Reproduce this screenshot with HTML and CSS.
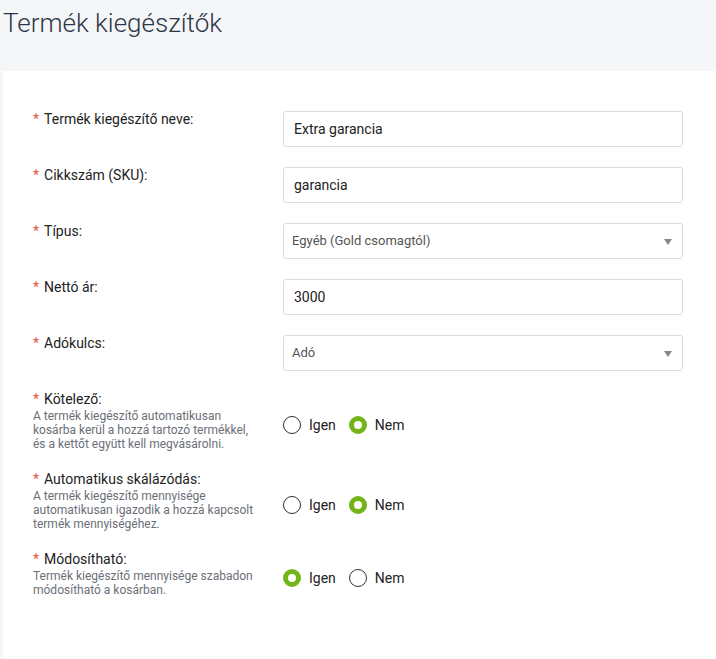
FILE: index.html
```html
<!DOCTYPE html>
<html lang="hu">
<head>
<meta charset="utf-8">
<title>Termék kiegészítők</title>
<link rel="stylesheet" href="styles.css">
</head>
<body>
<h1 class="page-title">Termék kiegészítők</h1>
<div class="card">
  <div class="row">
    <label class="label"><span class="req">*</span>Termék kiegészítő neve:</label>
    <div class="control"><div class="input">Extra garancia</div></div>
  </div>
  <div class="row">
    <label class="label"><span class="req">*</span>Cikkszám (SKU):</label>
    <div class="control"><div class="input">garancia</div></div>
  </div>
  <div class="row">
    <label class="label"><span class="req">*</span>Típus:</label>
    <div class="control"><div class="input select">Egyéb (Gold csomagtól)<span class="caret"></span></div></div>
  </div>
  <div class="row">
    <label class="label"><span class="req">*</span>Nettó ár:</label>
    <div class="control"><div class="input">3000</div></div>
  </div>
  <div class="row">
    <label class="label"><span class="req">*</span>Adókulcs:</label>
    <div class="control"><div class="input select">Adó<span class="caret"></span></div></div>
  </div>

  <div class="row radio-row">
    <div class="label-block">
      <div class="label"><span class="req">*</span>Kötelező:</div>
      <div class="desc">A termék kiegészítő automatikusan kosárba kerül a hozzá tartozó termékkel, és a kettőt együtt kell megvásárolni.</div>
    </div>
    <div class="radios">
      <span class="radio"><span class="dot"></span>Igen</span>
      <span class="radio"><span class="dot on"></span>Nem</span>
    </div>
  </div>
  <div class="row radio-row">
    <div class="label-block">
      <div class="label"><span class="req">*</span>Automatikus skálázódás:</div>
      <div class="desc">A termék kiegészítő mennyisége automatikusan igazodik a hozzá kapcsolt termék mennyiségéhez.</div>
    </div>
    <div class="radios">
      <span class="radio"><span class="dot"></span>Igen</span>
      <span class="radio"><span class="dot on"></span>Nem</span>
    </div>
  </div>
  <div class="row radio-row">
    <div class="label-block">
      <div class="label"><span class="req">*</span>Módosítható:</div>
      <div class="desc">Termék kiegészítő mennyisége szabadon módosítható a kosárban.</div>
    </div>
    <div class="radios">
      <span class="radio"><span class="dot on"></span>Igen</span>
      <span class="radio"><span class="dot"></span>Nem</span>
    </div>
  </div>
</div>
</body>
</html>
```
FILE: styles.css
```css
* { box-sizing: border-box; }
html, body { margin: 0; padding: 0; }
body {
  background: #f5f6f8;
  font-family: Roboto, "Liberation Sans", Arial, sans-serif;
  color: #222;
  height: 659px;
  display: flex;
  flex-direction: column;
  overflow: hidden;
}
.page-title {
  margin: 0;
  height: 71px;
  padding: 7px 0 0 3px;
  font-size: 26px;
  font-weight: 300;
  line-height: 32px;
  color: #2b3648;
}
.card {
  flex: 1;
  margin-left: 3px;
  background: #fff;
  padding: 38px 0 0 30px;
}
.row {
  display: grid;
  grid-template-columns: 250px 400px;
  margin-bottom: 18px;
}
.label {
  font-size: 14px;
  line-height: 20px;
  color: #222;
}
.req {
  color: #e5533f;
  margin-right: 5px;
}
.control { padding-top: 2px; }
.input {
  height: 36px;
  border: 1px solid #dcdcdc;
  border-radius: 3px;
  padding: 0 10px;
  font-size: 14px;
  line-height: 34px;
  color: #222;
  position: relative;
}
.select {
  padding-left: 8px;
  font-size: 13px;
  color: #555;
}
.caret {
  position: absolute;
  right: 10px;
  top: 15px;
  width: 0;
  height: 0;
  border-left: 4px solid transparent;
  border-right: 4px solid transparent;
  border-top: 6px solid #888;
}
.radio-row { align-items: center; }
.desc {
  font-size: 12px;
  line-height: 14px;
  color: #6b6f78;
  width: 228px;
}
.radios {
  display: flex;
  align-items: center;
  gap: 13px;
  padding-top: 10px;
}
.radio {
  display: flex;
  align-items: center;
  gap: 8px;
  font-size: 14px;
  color: #222;
}
.dot {
  width: 18px;
  height: 18px;
  border-radius: 50%;
  border: 1.5px solid #333;
  background: #fff;
}
.dot.on {
  border: 5px solid #72b51a;
}
```
